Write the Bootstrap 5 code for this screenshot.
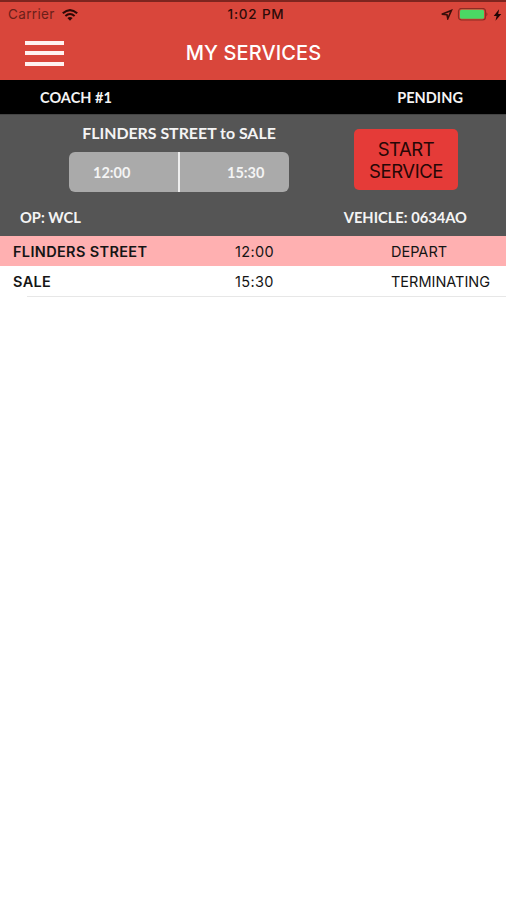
<!DOCTYPE html>
<html lang="en">
<head>
<meta charset="utf-8">
<meta name="viewport" content="width=device-width, initial-scale=1">
<title>My Services</title>
<link href="https://cdn.jsdelivr.net/npm/bootstrap@5.3.0/dist/css/bootstrap.min.css" rel="stylesheet">
<style>
body{font-family:Inter,"Liberation Sans",sans-serif;color:#151515;line-height:1;overflow:hidden}
.app-head{background:#d9463b;border-top:2px solid #7e251f;height:80px}
.status-line{height:25px;font-size:13.5px;padding-left:8px;padding-right:4px;color:#2c0b08}
.status-side{flex:1 1 0}
.carrier{color:#6b1f19;letter-spacing:.35px}
.wifi{margin-left:7px}
.clock{font-weight:500;letter-spacing:.8px;padding-left:2px}
.title-line{height:52px;padding:0 25px}
.title-side{width:60px}
.burger{width:39px;height:25px}
.burger span{height:4px;background:#fff2f0;display:block}
.title-text{font-size:20px;font-weight:500;letter-spacing:.1px;color:#fff;padding-left:1px}
.lato{font-family:Lato,"Liberation Sans",sans-serif;font-weight:700;color:#f4f4f4}
.coach-bar{height:34px;background:#000;font-size:14.5px;padding:2px 43px 0 40px;letter-spacing:.05px}
.info{height:122px;background:#555;border-top:1px solid #444}
.route-col{width:220px;margin-left:69px;padding-top:8px}
.route-name{font-size:15.9px;line-height:19px;margin-bottom:10px}
.times{height:40px;background:#aaa;border-radius:6px;font-size:14.5px}
.time-from{width:111px;border-right:2px solid #eee;padding:2px 0 0 24px}
.time-to{padding:2px 0 0 47px}
.start-btn{width:104px;height:61px;margin:14px 0 0 65px;padding-top:2px;background:#e53b38;border-radius:5px;color:#260706;font-size:18.5px;line-height:22px;letter-spacing:-.45px}
.foot-line{font-size:14.7px;padding:0 39px 0 20px;height:19px;margin-top:16px}
.stop-row{height:30px;font-size:14.5px;padding:2px 0 0 13px}
.stop-row.current{background:#ffb0b1}
.stop-name{width:222px;font-weight:600;letter-spacing:.35px}
.stop-time{width:156px;letter-spacing:.35px}
.rule{height:1px;background:#e7e7e7;margin-left:27px}
</style>
<script src="https://cdn.jsdelivr.net/npm/bootstrap@5.3.0/dist/js/bootstrap.bundle.min.js"></script>
</head>
<body class="bg-white">
<header class="app-head">
  <div class="status-line d-flex align-items-center">
    <div class="status-side d-flex align-items-center">
      <span class="carrier">Carrier</span>
      <svg class="wifi" width="16" height="12" viewBox="0 0 16 12" fill="none" stroke="#2c0906"><path d="M.8 4.3Q8-2.1 15.2 4.3" stroke-width="2.1"/><path d="M3.4 7Q8 3 12.6 7" stroke-width="2"/><path d="M5.4 9.1Q8 6.9 10.6 9.1L8 11.8z" fill="#2c0906" stroke="none"/></svg>
    </div>
    <span class="clock">1:02 PM</span>
    <div class="status-side d-flex align-items-center justify-content-end">
      <svg width="12" height="11" viewBox="0 0 12 11"><path d="M.8 5.3 10.4 1.4 6.8 9.6 6 5.8z" fill="none" stroke="#3a0e0a" stroke-width="1.6"/></svg>
      <svg class="ms-1" width="32" height="14" viewBox="0 0 32 14"><rect x="1.5" y=".5" width="27" height="11.5" rx="3" fill="none" stroke="#8d2c24" stroke-width="1.2"/><rect x="3" y="1.8" width="24" height="9" rx="1.5" fill="#4bd964"/><path d="M29.5 4.3q1.8 1.8 0 4z" fill="#7d251e"/></svg>
      <svg class="ms-1" width="9" height="12" viewBox="0 0 8 12"><path d="M5.6.3.2 6.9h2.9L2 11.8 7.8 4.9H4.7z" fill="#210605"/></svg>
    </div>
  </div>
  <div class="title-line d-flex align-items-center justify-content-between">
    <div class="title-side"><div class="burger d-flex flex-column justify-content-between"><span></span><span></span><span></span></div></div>
    <div class="title-text">MY SERVICES</div>
    <div class="title-side"></div>
  </div>
</header>
<main>
  <div class="coach-bar lato d-flex align-items-center justify-content-between"><span>COACH #1</span><span>PENDING</span></div>
  <section class="info">
    <div class="d-flex">
      <div class="route-col lato">
        <div class="route-name text-center">FLINDERS STREET to SALE</div>
        <div class="times d-flex overflow-hidden">
          <div class="time-from d-flex align-items-center">12:00</div>
          <div class="time-to d-flex align-items-center">15:30</div>
        </div>
      </div>
      <button type="button" class="start-btn border-0">START<br>SERVICE</button>
    </div>
    <div class="foot-line lato d-flex align-items-center justify-content-between"><span>OP: WCL</span><span>VEHICLE: 0634AO</span></div>
  </section>
  <div class="stop-row current d-flex align-items-center"><span class="stop-name">FLINDERS STREET</span><span class="stop-time">12:00</span><span>DEPART</span></div>
  <div class="stop-row d-flex align-items-center"><span class="stop-name">SALE</span><span class="stop-time">15:30</span><span>TERMINATING</span></div>
  <div class="rule"></div>
</main>
</body>
</html>
